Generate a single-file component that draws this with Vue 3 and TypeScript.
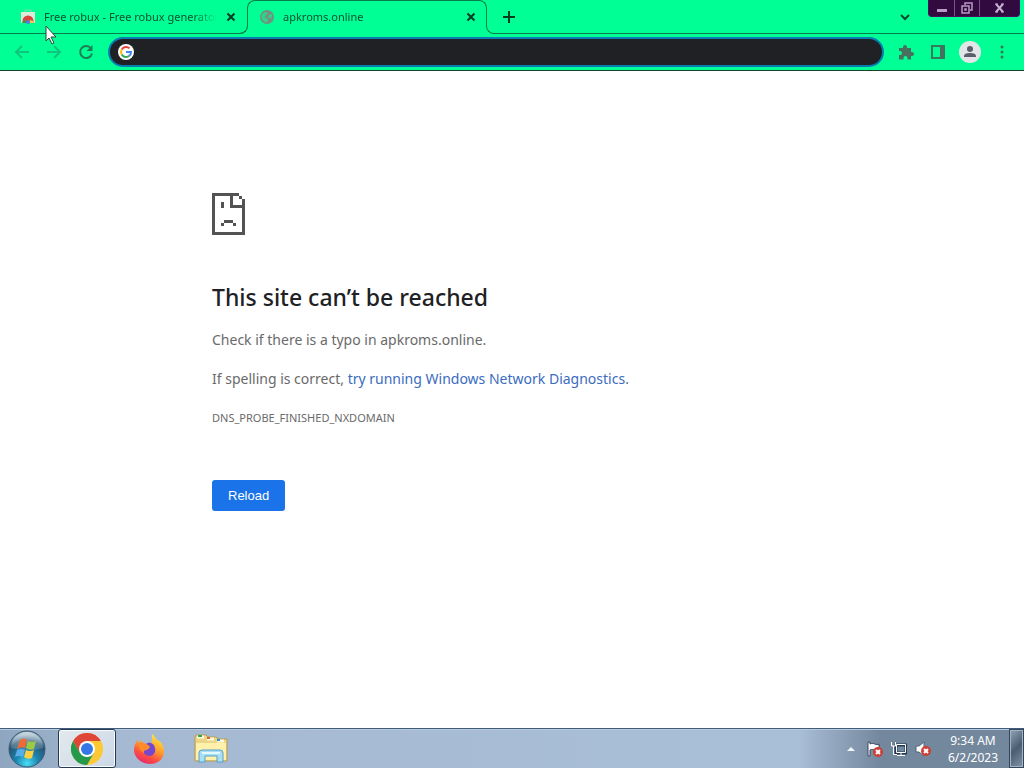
<script setup lang="ts">
import { ref } from 'vue'

const address = ref('')
const tabs = [
  { title: 'Free robux - Free robux generator', icon: 'store', active: false },
  { title: 'apkroms.online', icon: 'globe', active: true },
]
</script>

<template>
  <div class="desktop">
    <header class="chrome">
      <nav class="tabs" aria-label="Tabs">
        <div v-for="tab in tabs" :key="tab.title" class="tab" :class="{ active: tab.active }">
          <span v-if="tab.active" class="outline"></span>
          <svg v-if="tab.icon === 'store'" class="favicon" viewBox="0 0 16 16">
            <path d="M1 3h14v11H1z" fill="#dfe9da" />
            <path d="M5 3V1h6v2" fill="none" stroke="#7ddcaa" />
            <path d="M2.500 14v-2a5.500 5.500 0 0 1 11 0v2z" fill="#d9453b" />
            <path d="M2.500 14q0-3 2-3.500l2 3.500z" fill="#3c9a50" />
            <path d="M9 14l1-3 3.500 1v2z" fill="#efc84a" />
            <circle cx="8" cy="13" r="2" fill="#4c7fdc" />
          </svg>
          <svg v-else class="favicon" viewBox="0 0 16 16">
            <circle cx="8" cy="8" r="7" fill="#739080" />
            <path d="M2.500 6.500C4 3 7 3 8.500 3.500 7.500 5 8 6 6.500 6.500c0 2-2 1-1.500 2 3 0 4 1 4 3l-1 2C5 13 2 10.500 2.500 6.500zM10 6l3-1q1 2-1 5c-1-2-3-1-3-2z" fill="#31d28a" />
          </svg>
          <span class="title">{{ tab.title }}</span>
          <button class="close" aria-label="Close tab">
            <svg width="10" height="10" viewBox="0 0 10 10"><path d="M1.500 1.500l7 7m0-7l-7 7" stroke="#053c22" stroke-width="2" /></svg>
          </button>
        </div>
        <div class="strip">
          <button class="new-tab" aria-label="New tab">
            <svg width="12" height="12" viewBox="0 0 12 12"><path d="M6 0v12M0 6h12" stroke="#033b20" stroke-width="2" /></svg>
          </button>
          <button class="search-tabs" aria-label="Search tabs">
            <svg width="12" height="8" viewBox="0 0 12 8"><path d="M2 2l4 4 4-4" fill="none" stroke="#054d2c" stroke-width="2" /></svg>
          </button>
          <div class="window-buttons">
            <button aria-label="Minimize"><svg width="12" height="12" viewBox="0 0 12 12"><path d="M1 7h10v3H1z" fill="#b79bc4" /></svg></button>
            <button aria-label="Restore"><svg width="12" height="12" viewBox="0 0 12 12"><path d="M4 3V1h7v7H9M1 4h7v7H1zM4 7h1v1H4z" fill="none" stroke="#b79bc4" stroke-width="1.500" /></svg></button>
            <button aria-label="Close"><svg width="12" height="12" viewBox="0 0 12 12"><path d="M2 2l7 8M9 2l-7 8" stroke="#c8add2" stroke-width="2" /><path d="M1 2h3M7 2h3M1 10h3M7 10h3" stroke="#c8add2" /></svg></button>
          </div>
        </div>
      </nav>

      <div class="toolbar">
        <button class="tool" aria-label="Back" disabled>
          <svg width="16" height="16" viewBox="0 0 16 16"><path d="M15 8H2m6-6L2 8l6 6" fill="none" stroke="#0fc77c" stroke-width="2" /></svg>
        </button>
        <button class="tool" aria-label="Forward" disabled>
          <svg width="16" height="16" viewBox="0 0 16 16"><path d="M1 8h13M8 2l6 6-6 6" fill="none" stroke="#0fc77c" stroke-width="2" /></svg>
        </button>
        <button class="tool" aria-label="Reload page">
          <svg width="16" height="16" viewBox="0 0 16 16"><path d="M13 4.500A6 6 0 1 0 14 9.500" fill="none" stroke="#1c7f56" stroke-width="2" /><path d="M14.500 1v6H8.500z" fill="#1c7f56" /></svg>
        </button>
        <label class="omnibox">
          <svg width="16" height="16" viewBox="0 0 16 16">
            <circle cx="8" cy="8" r="8" fill="#fff" />
            <g fill="none" stroke-width="2">
              <path d="M3.700 5.500A5 5 0 0 1 11.500 4.400" stroke="#ea4335" />
              <path d="M3.700 10.500a5 5 0 0 1 0-5" stroke="#fbbc05" />
              <path d="M11.300 11.800A5 5 0 0 1 3.700 10.500" stroke="#34a853" />
              <path d="M8 8h5a5 5 0 0 1-1.700 3.800" stroke="#4285f4" />
            </g>
          </svg>
          <input v-model="address" type="text" aria-label="Address and search bar" />
        </label>
        <button class="tool" aria-label="Extensions">
          <svg width="16" height="16" viewBox="0 0 16 16"><path d="M1 4h4V3a2 2 0 0 1 4 0v1h4v4h1a2 2 0 0 1 0 4h-1v3.500H9.500V14a2 2 0 0 0-4 0v1.500H1V11h1a2 2 0 0 0 0-4H1z" fill="#48705e" /></svg>
        </button>
        <button class="tool" aria-label="Side panel">
          <svg width="16" height="16" viewBox="0 0 16 16"><path d="M2 2h12v12H2z" fill="none" stroke="#327b5c" stroke-width="2" /><path d="M10 2h4v12h-4z" fill="#48705e" /></svg>
        </button>
        <button class="tool" aria-label="Profile">
          <svg width="22" height="22" viewBox="0 0 22 22"><circle cx="11" cy="11" r="11" fill="#e3e6e8" /><circle cx="11" cy="8" r="3" fill="#59606a" /><path d="M5 16v-1q0-3 6-3t6 3v1z" fill="#59606a" /></svg>
        </button>
        <button class="tool" aria-label="Menu">
          <svg width="16" height="16" viewBox="0 0 16 16" fill="#327b5c"><circle cx="8" cy="3" r="1.500" /><circle cx="8" cy="8" r="1.500" /><circle cx="8" cy="13" r="1.500" /></svg>
        </button>
      </div>
    </header>

    <main class="page">
      <svg class="sad" width="33" height="42" viewBox="0 0 33 42" fill="#535353" shape-rendering="crispEdges">
        <path d="M0 0h27v3h3v3h3v36H0zM3 3v36h27V15H18V3zM21 3v9h9V6h-3V3z" fill-rule="evenodd" />
        <path d="M9 9h3v6H9zM12 27h9v3h-9zM9 30h3v3H9zM21 30h3v3h-3z" />
      </svg>
      <h1>This site can’t be reached</h1>
      <p>Check if there is a typo in apkroms.online.</p>
      <p>If spelling is correct, <a href="#diagnostics">try running Windows Network Diagnostics</a>.</p>
      <p class="code">DNS_PROBE_FINISHED_NXDOMAIN</p>
      <button class="reload">Reload</button>
    </main>

    <footer class="taskbar">
      <button class="start" aria-label="Start">
        <svg width="38" height="38" viewBox="0 0 38 38">
          <defs>
            <radialGradient id="orb" cx=".5" cy=".9" r=".8"><stop offset="0" stop-color="#49dff5" /><stop offset=".4" stop-color="#1c83ae" /><stop offset=".8" stop-color="#27516f" /><stop offset="1" stop-color="#8ba6b8" /></radialGradient>
            <linearGradient id="gloss" x2="0" y2="1"><stop offset="0" stop-color="#dce7ed" stop-opacity=".8" /><stop offset="1" stop-color="#9bb5c5" stop-opacity=".2" /></linearGradient>
          </defs>
          <circle cx="19" cy="19" r="18" fill="url(#orb)" stroke="#395b77" />
          <path d="M3 18a16 16 0 0 1 32 0q-16 5-32 0z" fill="url(#gloss)" />
          <path d="M12 10q4-3 7 0l-2 8q-4-2-8 1z" fill="#ee6a36" />
          <path d="M20 11q4 2 8 0l-2 8q-4 2-8-1z" fill="#9bcb45" />
          <path d="M9 20q4-2 8 0l-2 7q-4-2-8 0z" fill="#58aee8" />
          <path d="M18 20q4 2 8 0l-2 8q-4 2-8-1z" fill="#ffd043" />
        </svg>
      </button>
      <button class="app running" aria-label="Google Chrome">
        <svg width="32" height="32" viewBox="0 0 32 32">
          <circle cx="16" cy="16" r="16" fill="#fcc934" />
          <path d="M2.140 8A16 16 0 0 1 29.860 8H16L9.070 20z" fill="#df4637" />
          <path d="M2.140 8A16 16 0 0 0 16 32l6.930-12L16 16 9.070 20z" fill="#25984a" />
          <circle cx="16" cy="16" r="8" fill="#fff" /><circle cx="16" cy="16" r="6" fill="#3478e8" />
        </svg>
      </button>
      <button class="app" aria-label="Firefox">
        <svg width="32" height="32" viewBox="0 0 32 32">
          <defs><linearGradient id="fox" x1=".8" y1="0" x2=".3" y2="1"><stop offset="0" stop-color="#fff044" /><stop offset=".45" stop-color="#ff9d2c" /><stop offset=".75" stop-color="#fb4b43" /><stop offset="1" stop-color="#e62a72" /></linearGradient></defs>
          <path d="M19 1c3 2 3 4 5 6 4 1 7 6 7 11 0 8-6 13-14 13S1 25 1 17c0-5 2-8 4-10l1 3 3-3 1 4h6l3-2z" fill="url(#fox)" />
          <path d="M12 12q4-5 9 0 4 9-4 11c-5 0-8-4-6-8l4 1 2-2z" fill="#7447ce" />
          <path d="M6 10q7-1 11 4l-3 3q-4 0-3 3-6-3-5-10z" fill="#ff8b29" />
        </svg>
      </button>
      <button class="app" aria-label="File Explorer">
        <svg width="34" height="32" viewBox="0 0 34 32">
          <path d="M1 4l1-2h10l2 2h8l2 2h9v22H1z" fill="#ead685" stroke="#b79a52" />
          <path d="M3 4h7M13 6h7M23 8h7" stroke="#fffbe0" stroke-width="3" />
          <path d="M4 3h4" stroke="#35a64a" stroke-width="2" /><path d="M13 5h3" stroke="#d86632" stroke-width="2" /><path d="M23 7h3" stroke="#4b89c7" stroke-width="2" />
          <path d="M2 10h30v17H2z" fill="#fff0ac" />
          <path d="M5 29V20q0-3 3-3h18q3 0 3 3v9h-6v-6H11v6z" fill="#a9dff5" stroke="#559fca" />
          <path d="M8 20h18" stroke="#e3faff" stroke-width="2" />
        </svg>
      </button>
      <div class="tray">
        <button aria-label="Show hidden icons"><svg width="8" height="4" viewBox="0 0 8 4"><path d="M0 4l4-4 4 4z" fill="#f4f8fb" /></svg></button>
        <button aria-label="Action Center">
          <svg width="16" height="16" viewBox="0 0 16 16"><path d="M1 1v14h2V9c4-2 6 2 9 0V3C9 5 7 1 3 3V1z" fill="#fff" stroke="#3a4a5d" /><circle cx="11" cy="11" r="5" fill="#cf3e35" /><path d="M9 9l4 4m0-4l-4 4" stroke="#fff" stroke-width="2" /></svg>
        </button>
        <button aria-label="Network">
          <svg width="16" height="16" viewBox="0 0 16 16"><path d="M5 4h10v8H5z" fill="#738ba1" stroke="#253b52" stroke-width="3" /><path d="M5.500 3.500h9v8h-9zM10 12v3M6 14.500h8M.5 1v4h4V1M2.500 5v8.500H6" fill="none" stroke="#fff" /></svg>
        </button>
        <button aria-label="Volume muted">
          <svg width="16" height="16" viewBox="0 0 16 16"><path d="M1 5h3l5-4v14l-5-4H1z" fill="#fff" stroke="#536477" /><circle cx="11" cy="10" r="5" fill="#cf3e35" /><path d="M9 8l4 4m0-4l-4 4" stroke="#fff" stroke-width="2" /></svg>
        </button>
      </div>
      <time class="clock" datetime="2023-06-02T09:34"><span>9:34 AM</span><span>6/2/2023</span></time>
      <button class="show-desktop" aria-label="Show desktop"></button>
    </footer>

    <svg class="cursor" width="12" height="20" viewBox="0 0 12 20"><path d="M1 1v15l3-3 3 6 2-1-3-6h5z" fill="#fff" stroke="#28483b" /></svg>
  </div>
</template>

<style>
body {
  margin: 0;
}
</style>

<style scoped>
.desktop {
  position: relative;
  display: flex;
  flex-direction: column;
  min-height: 100vh;
  background: #fff;
  font-family: "Noto Sans", "Open Sans", sans-serif;
}
.desktop * {
  box-sizing: border-box;
}
button {
  display: flex;
  align-items: center;
  justify-content: center;
  padding: 0;
  border: 0;
  background: none;
  font: inherit;
}
svg {
  flex: none;
  display: block;
}
.chrome {
  background: #00ff95;
  border-bottom: 1px solid #14442f;
}
.tabs {
  display: flex;
  height: 34px;
}
.tab {
  position: relative;
  display: flex;
  align-items: center;
  gap: 8px;
  flex: 0 1 240px;
  min-width: 0;
  padding: 0 10px 0 12px;
}
.tab:first-child {
  flex-basis: 247px;
  padding-left: 20px;
  border-bottom: 1px solid #087c4c;
  border-bottom-right-radius: 8px;
}
.outline {
  position: absolute;
  inset: 0 0 8px;
  border: 1px solid #087c4c;
  border-bottom: 0;
  border-radius: 8px 8px 0 0;
}
.tab.active::before,
.tab.active::after {
  content: "";
  position: absolute;
  bottom: 0;
  width: 8px;
  height: 8px;
  border-bottom: 1px solid #087c4c;
}
.tab.active::before {
  right: calc(100% - 1px);
  border-right: 1px solid #087c4c;
  border-bottom-right-radius: 8px;
}
.tab.active::after {
  left: calc(100% - 1px);
  border-left: 1px solid #087c4c;
  border-bottom-left-radius: 8px;
}
.favicon {
  width: 16px;
  height: 16px;
}
.title {
  flex: 1;
  min-width: 0;
  overflow: hidden;
  white-space: nowrap;
  font-size: 11px;
  line-height: 16px;
  color: #075030;
  mask-image: linear-gradient(to right, #000 calc(100% - 24px), transparent);
}
.close {
  width: 12px;
  height: 16px;
}
.strip {
  display: flex;
  flex: 1;
  align-items: center;
  margin-left: 7px;
  padding: 0 4px 0 9px;
  border-bottom: 1px solid #087c4c;
}
.search-tabs {
  margin-left: auto;
  margin-right: 17px;
}
.window-buttons {
  display: flex;
  align-self: flex-start;
  height: 17px;
  border: 1px solid #48105c;
  border-top: 0;
  border-radius: 0 0 4px 4px;
  background: #310b40;
}
.window-buttons button {
  width: 25px;
}
.window-buttons button + button {
  border-left: 1px solid #76538a;
}
.window-buttons button:last-child {
  width: 40px;
}
.toolbar {
  display: flex;
  align-items: center;
  gap: 8px;
  height: 36px;
  padding: 0 10px;
}
.tool {
  width: 24px;
  height: 24px;
}
.omnibox {
  display: flex;
  flex: 1;
  align-items: center;
  gap: 8px;
  height: 30px;
  margin: 0 2px;
  padding: 0 8px;
  border: 2px solid #087cb0;
  border-radius: 15px;
  background: #202124;
}
.omnibox input {
  flex: 1;
  min-width: 0;
  padding: 0;
  border: 0;
  outline: 0;
  background: none;
  color: #fff;
  font: 14px/20px "Noto Sans", sans-serif;
}
.page {
  flex: 1;
  width: 100%;
  max-width: 600px;
  margin: 0 auto;
  padding-top: 122px;
  color: #6a6a6a;
  font-size: 14px;
  line-height: 24px;
}
h1 {
  margin: 47px 0 16px;
  color: #202124;
  font-size: 23px;
  font-weight: 500;
  line-height: 30px;
}
p {
  margin: 0 0 15px;
}
a {
  color: #3b6cc0;
  text-decoration: none;
}
.code {
  font-size: 11px;
}
.reload {
  height: 31px;
  margin-top: 50px;
  padding: 0 16px;
  border-radius: 3px;
  background: #1a73e8;
  color: #fff;
  font: 13px/20px "Liberation Sans", sans-serif;
}
.taskbar {
  display: flex;
  height: 40px;
  border-top: 1px solid #405d7d;
  background: linear-gradient(to right, #8fa6c0, #a5bad2 12%, #a9bed7 78%, #73879d 86%, #73879d);
  box-shadow: inset 0 1px #bacbdc;
}
.start {
  width: 54px;
}
.app {
  width: 58px;
  margin-left: 4px;
}
.running {
  border: 1px solid #263b50;
  border-radius: 3px;
  background: linear-gradient(135deg, #e3e9ef, #cbd8e5);
  box-shadow: inset 0 0 0 1px #f8fbff;
}
.tray {
  display: flex;
  align-items: center;
  gap: 8px;
  margin-left: auto;
}
.tray button:first-child {
  margin-right: 4px;
}
.clock {
  display: flex;
  flex-direction: column;
  justify-content: center;
  width: 72px;
  margin-left: 6px;
  text-align: center;
  color: #fff;
  font-size: 12px;
  line-height: 17px;
}
.show-desktop {
  width: 15px;
  border: 1px solid #33475c;
  background: linear-gradient(135deg, #92a5b7, #4a5e73 50%, #8194a7);
  box-shadow: inset 0 0 0 1px #a3b3c3;
}
.cursor {
  position: absolute;
  top: 25px;
  left: 45px;
}
</style>
